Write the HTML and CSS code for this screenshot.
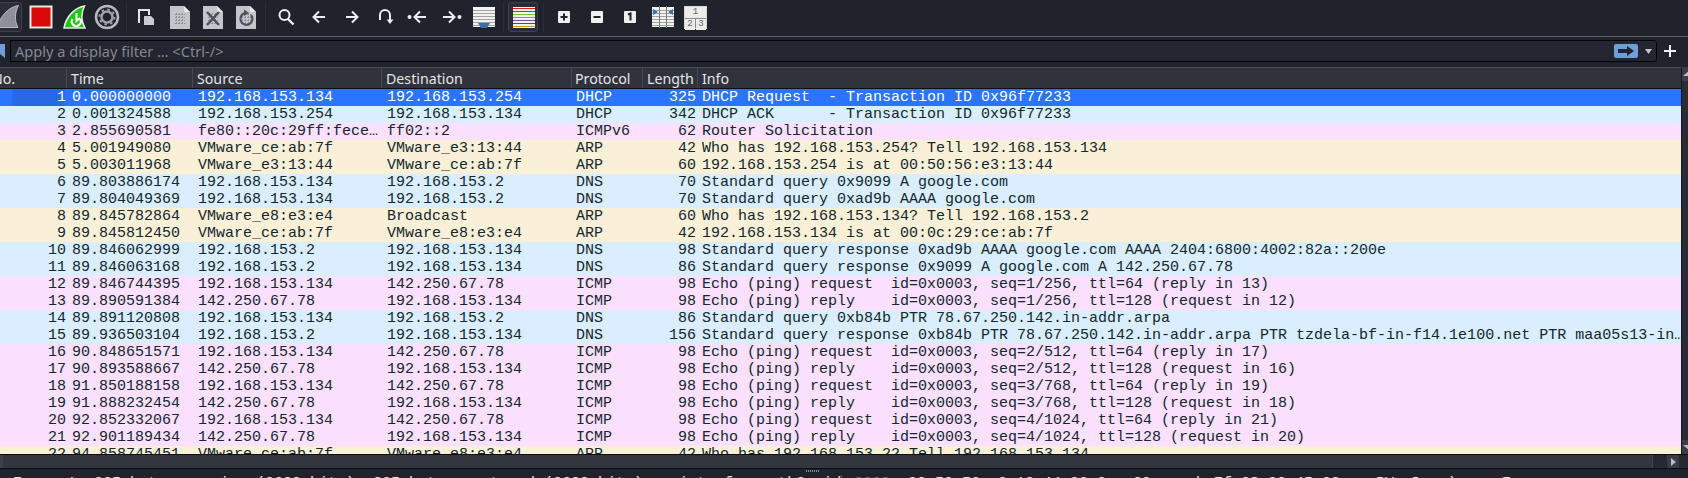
FILE: index.html
```html
<!DOCTYPE html>
<html>
<head>
  <title>Wireshark capture</title>
  <link rel="stylesheet" href="styles.css">
</head>
<body>
  <!-- shared page shapes for the toolbar icons -->
  <svg class="defs">
    <symbol id="doc" viewBox="0 0 24 24">
      <path d="M2 1H16L22 7V24H2Z" fill="#c3c5cb"/>
      <path d="M16 1L22 7H16Z" fill="#e6e7ea"/>
      <path d="M7 9.500H17M7 12.500H17M7 15.500H17M7 18.500H17M8.500 8V20M11.500 8V20M14.500 8V20" stroke="#8b8e96" stroke-width="1" stroke-dasharray="2 1"/>
    </symbol>
    <symbol id="lines" viewBox="0 0 24 24">
      <path d="M1 2H23V22H1Z" fill="#f1f1ef"/>
      <path d="M1 5.500H23M1 8.500H23M1 11.500H23M1 14.500H23M1 17.500H23M1 20.500H23" stroke="#a3a3a0" stroke-width="1"/>
    </symbol>
  </svg>

  <div class="toolbar">
    <div class="tool framed">
      <svg width="24" height="24" viewBox="0 0 24 24"><path d="M22.500 .5C12 2 4 12 1 22.500H22C18.500 16 18.500 8 22.500 .5Z" fill="#8d9098" stroke="#b9bbc0"/></svg>
    </div>
    <div class="tool">
      <svg width="24" height="24" viewBox="0 0 24 24"><rect x="1.500" y="1.500" width="21" height="21" fill="#d90a0a" stroke="#e8e8e8" stroke-width="2"/></svg>
    </div>
    <div class="tool">
      <svg width="24" height="24" viewBox="0 0 24 24"><path d="M22.500 1C12 3 4 12 2 23H23C19 16 19 8 22.500 1Z" fill="#1cc80c" stroke="#ececec" stroke-width="1.500"/><path d="M10.500 14A4.500 4.500 0 1 0 18 14" fill="none" stroke="#fff" stroke-width="2"/><path d="M14.500 8V16L18 13" fill="none" stroke="#fff" stroke-width="2"/></svg>
    </div>
    <div class="tool">
      <svg width="26" height="26" viewBox="0 0 26 26"><circle cx="13" cy="13" r="11" fill="none" stroke="#b6b8bd" stroke-width="2.500"/><circle cx="13" cy="13" r="5.500" fill="none" stroke="#9ea1a7" stroke-width="2.500"/><circle cx="13" cy="13" r="7.500" fill="none" stroke="#9ea1a7" stroke-width="2" stroke-dasharray="2.500 3.400"/></svg>
    </div>
    <div class="sep"></div>
    <div class="tool">
      <svg width="24" height="24" viewBox="0 0 24 24"><path d="M4 18V5H14V10" fill="none" stroke="#e6e6e6" stroke-width="2"/><path d="M9 11H16L19 14V20H9Z" fill="#c9cbd0"/></svg>
    </div>
    <div class="tool"><svg width="24" height="24"><use href="#doc"/></svg></div>
    <div class="tool">
      <svg width="24" height="24" viewBox="0 0 24 24"><use href="#doc" width="24" height="24"/><path d="M6 7L18 20M18 7L6 20" stroke="#4d5058" stroke-width="2.500"/></svg>
    </div>
    <div class="tool">
      <svg width="24" height="24" viewBox="0 0 24 24"><use href="#doc" width="24" height="24"/><path d="M17 10A6 6 0 1 1 11 8" fill="none" stroke="#4d5058" stroke-width="2.200"/><path d="M10 4.500V11L15 8Z" fill="#4d5058"/></svg>
    </div>
    <div class="sep"></div>
    <div class="tool">
      <svg width="24" height="24" viewBox="0 0 24 24"><circle cx="10.500" cy="10" r="5" fill="none" stroke="#eee" stroke-width="2"/><path d="M14 14L19.500 19.500" stroke="#eee" stroke-width="2.400"/></svg>
    </div>
    <div class="tool">
      <svg width="24" height="24" viewBox="0 0 24 24"><path d="M18 12H7M12 6.500L6.500 12L12 17.500" fill="none" stroke="#eee" stroke-width="2"/></svg>
    </div>
    <div class="tool">
      <svg width="24" height="24" viewBox="0 0 24 24"><path d="M6 12H17M12 6.500L17.500 12L12 17.500" fill="none" stroke="#eee" stroke-width="2"/></svg>
    </div>
    <div class="tool">
      <svg width="24" height="24" viewBox="0 0 24 24"><path d="M7 15V10A5 5 0 0 1 17 10V17" fill="none" stroke="#eee" stroke-width="2"/><path d="M13.500 14.500L17 19L20.500 14.500Z" fill="#eee"/></svg>
    </div>
    <div class="tool">
      <svg width="24" height="24" viewBox="0 0 24 24"><circle cx="3.500" cy="12" r="2" fill="#eee"/><path d="M20 12H10M14 6.500L8.500 12L14 17.500" fill="none" stroke="#eee" stroke-width="2"/></svg>
    </div>
    <div class="tool">
      <svg width="24" height="24" viewBox="0 0 24 24"><path d="M4 12H14M10 6.500L15.500 12L10 17.500" fill="none" stroke="#eee" stroke-width="2"/><circle cx="20.500" cy="12" r="2" fill="#eee"/></svg>
    </div>
    <div class="tool">
      <svg width="24" height="24" viewBox="0 0 24 24"><use href="#lines" width="24" height="24"/><path d="M6 18H18L15 23H9Z" fill="#3a6eaa"/></svg>
    </div>
    <div class="sep"></div>
    <div class="tool framed">
      <svg width="24" height="24" viewBox="0 0 24 24"><path d="M1 2H23V23H1Z" fill="#f1f1ef"/><path d="M1 3.500H23" stroke="#e01b1b"/><path d="M1 6.500H23" stroke="#2b5fb0"/><path d="M1 9.500H23" stroke="#7ec21f"/><path d="M1 12.500H23" stroke="#8f8f8f"/><path d="M1 15.500H23" stroke="#7a4d9c"/><path d="M1 18.500H23" stroke="#5a4a68"/><path d="M1 21.500H23" stroke="#c79a1b"/></svg>
    </div>
    <div class="sep"></div>
    <div class="tool">
      <svg width="24" height="24" viewBox="0 0 24 24"><rect x="6" y="6" width="12" height="12" rx="1" fill="#efefef"/><path d="M8.500 12H15.500M12 8.500V15.500" stroke="#222" stroke-width="2"/></svg>
    </div>
    <div class="tool">
      <svg width="24" height="24" viewBox="0 0 24 24"><rect x="6" y="6" width="12" height="12" rx="1" fill="#efefef"/><path d="M8.500 12H15.500" stroke="#222" stroke-width="2"/></svg>
    </div>
    <div class="tool">
      <svg width="24" height="24" viewBox="0 0 24 24"><rect x="6" y="6" width="12" height="12" rx="1" fill="#efefef"/><path d="M10 9.500L12.500 8.500V15.500" fill="none" stroke="#222" stroke-width="2"/></svg>
    </div>
    <div class="tool">
      <svg width="24" height="24" viewBox="0 0 24 24"><use href="#lines" width="24" height="24"/><path d="M2 4L7 7L2 10ZM22 4L17 7L22 10Z" fill="#3a6eaa"/><path d="M8.500 1V23M15.500 1V23" stroke="#77797d"/></svg>
    </div>
    <div class="tool">
      <div class="panes">
        <span class="pane-top">1</span>
        <span>2</span>
        <span>3</span>
      </div>
    </div>
  </div>

  <div class="filterbar">
    <svg class="bookmark" width="5" height="16" viewBox="0 0 5 16"><path d="M0 1H5V15L0 11Z" fill="#6f9fd8"/></svg>
    <div class="filter">
      <span class="placeholder">Apply a display filter … &lt;Ctrl-/&gt;</span>
      <span class="apply">
        <svg width="16" height="10" viewBox="0 0 16 10"><path d="M0 3H9V0L16 5L9 10V7H0Z" fill="#1e2430"/></svg>
      </span>
      <svg class="caret" width="7" height="5" viewBox="0 0 7 5"><path d="M0 0H7L3.500 5Z" fill="#c4c6ca"/></svg>
    </div>
    <svg class="add" width="14" height="14" viewBox="0 0 14 14"><path d="M7 1V13M1 7H13" stroke="#eee" stroke-width="2"/></svg>
  </div>

  <div class="packets">
    <div class="list">
      <div class="cols head">
        <div class="no-head">No.</div><div>Time</div><div>Source</div><div>Destination</div><div>Protocol</div><div>Length</div><div>Info</div>
      </div>
      <div class="rows">
        <div class="cols row selected"><div>1</div><div>0.000000000</div><div>192.168.153.134</div><div>192.168.153.254</div><div>DHCP</div><div>325</div><div>DHCP Request  - Transaction ID 0x96f77233</div></div>
        <div class="cols row udp"><div>2</div><div>0.001324588</div><div>192.168.153.254</div><div>192.168.153.134</div><div>DHCP</div><div>342</div><div>DHCP ACK      - Transaction ID 0x96f77233</div></div>
        <div class="cols row icmp"><div>3</div><div>2.855690581</div><div>fe80::20c:29ff:fece…</div><div>ff02::2</div><div>ICMPv6</div><div>62</div><div>Router Solicitation</div></div>
        <div class="cols row arp"><div>4</div><div>5.001949080</div><div>VMware_ce:ab:7f</div><div>VMware_e3:13:44</div><div>ARP</div><div>42</div><div>Who has 192.168.153.254? Tell 192.168.153.134</div></div>
        <div class="cols row arp"><div>5</div><div>5.003011968</div><div>VMware_e3:13:44</div><div>VMware_ce:ab:7f</div><div>ARP</div><div>60</div><div>192.168.153.254 is at 00:50:56:e3:13:44</div></div>
        <div class="cols row udp"><div>6</div><div>89.803886174</div><div>192.168.153.134</div><div>192.168.153.2</div><div>DNS</div><div>70</div><div>Standard query 0x9099 A google.com</div></div>
        <div class="cols row udp"><div>7</div><div>89.804049369</div><div>192.168.153.134</div><div>192.168.153.2</div><div>DNS</div><div>70</div><div>Standard query 0xad9b AAAA google.com</div></div>
        <div class="cols row arp"><div>8</div><div>89.845782864</div><div>VMware_e8:e3:e4</div><div>Broadcast</div><div>ARP</div><div>60</div><div>Who has 192.168.153.134? Tell 192.168.153.2</div></div>
        <div class="cols row arp"><div>9</div><div>89.845812450</div><div>VMware_ce:ab:7f</div><div>VMware_e8:e3:e4</div><div>ARP</div><div>42</div><div>192.168.153.134 is at 00:0c:29:ce:ab:7f</div></div>
        <div class="cols row udp"><div>10</div><div>89.846062999</div><div>192.168.153.2</div><div>192.168.153.134</div><div>DNS</div><div>98</div><div>Standard query response 0xad9b AAAA google.com AAAA 2404:6800:4002:82a::200e</div></div>
        <div class="cols row udp"><div>11</div><div>89.846063168</div><div>192.168.153.2</div><div>192.168.153.134</div><div>DNS</div><div>86</div><div>Standard query response 0x9099 A google.com A 142.250.67.78</div></div>
        <div class="cols row icmp"><div>12</div><div>89.846744395</div><div>192.168.153.134</div><div>142.250.67.78</div><div>ICMP</div><div>98</div><div>Echo (ping) request  id=0x0003, seq=1/256, ttl=64 (reply in 13)</div></div>
        <div class="cols row icmp"><div>13</div><div>89.890591384</div><div>142.250.67.78</div><div>192.168.153.134</div><div>ICMP</div><div>98</div><div>Echo (ping) reply    id=0x0003, seq=1/256, ttl=128 (request in 12)</div></div>
        <div class="cols row udp"><div>14</div><div>89.891120808</div><div>192.168.153.134</div><div>192.168.153.2</div><div>DNS</div><div>86</div><div>Standard query 0xb84b PTR 78.67.250.142.in-addr.arpa</div></div>
        <div class="cols row udp"><div>15</div><div>89.936503104</div><div>192.168.153.2</div><div>192.168.153.134</div><div>DNS</div><div>156</div><div>Standard query response 0xb84b PTR 78.67.250.142.in-addr.arpa PTR tzdela-bf-in-f14.1e100.net PTR maa05s13-in…</div></div>
        <div class="cols row icmp"><div>16</div><div>90.848651571</div><div>192.168.153.134</div><div>142.250.67.78</div><div>ICMP</div><div>98</div><div>Echo (ping) request  id=0x0003, seq=2/512, ttl=64 (reply in 17)</div></div>
        <div class="cols row icmp"><div>17</div><div>90.893588667</div><div>142.250.67.78</div><div>192.168.153.134</div><div>ICMP</div><div>98</div><div>Echo (ping) reply    id=0x0003, seq=2/512, ttl=128 (request in 16)</div></div>
        <div class="cols row icmp"><div>18</div><div>91.850188158</div><div>192.168.153.134</div><div>142.250.67.78</div><div>ICMP</div><div>98</div><div>Echo (ping) request  id=0x0003, seq=3/768, ttl=64 (reply in 19)</div></div>
        <div class="cols row icmp"><div>19</div><div>91.888232454</div><div>142.250.67.78</div><div>192.168.153.134</div><div>ICMP</div><div>98</div><div>Echo (ping) reply    id=0x0003, seq=3/768, ttl=128 (request in 18)</div></div>
        <div class="cols row icmp"><div>20</div><div>92.852332067</div><div>192.168.153.134</div><div>142.250.67.78</div><div>ICMP</div><div>98</div><div>Echo (ping) request  id=0x0003, seq=4/1024, ttl=64 (reply in 21)</div></div>
        <div class="cols row icmp"><div>21</div><div>92.901189434</div><div>142.250.67.78</div><div>192.168.153.134</div><div>ICMP</div><div>98</div><div>Echo (ping) reply    id=0x0003, seq=4/1024, ttl=128 (request in 20)</div></div>
        <div class="cols row arp"><div>22</div><div>94.858745451</div><div>VMware_ce:ab:7f</div><div>VMware_e8:e3:e4</div><div>ARP</div><div>42</div><div>Who has 192.168.153.22 Tell 192.168.153.134</div></div>
      </div>
    </div>
    <div class="vscroll">
      <svg class="vbtn" width="7" height="14" viewBox="0 0 7 14"><path d="M1 9L7 4V9Z" fill="#b9bbc0"/></svg>
      <svg class="vbtn" width="7" height="14" viewBox="0 0 7 14"><path d="M1 5H7V10Z" fill="#b9bbc0"/></svg>
    </div>
  </div>

  <div class="hscroll">
    <div class="hthumb"></div>
    <div class="hbtn"><svg width="5" height="8" viewBox="0 0 5 8"><path d="M0 0L5 4L0 8Z" fill="#b9bbc0"/></svg></div>
  </div>

  <div class="splitter"><span class="grip"></span></div>

  <div class="panes-bottom">
    <div class="details">Frame 1: 325 bytes on wire (2600 bits), 325 bytes captured (2600 bits) on interface eth0, id 0</div>
    <div class="bytes"><span class="offset">0000</span>  00 50 56 e3 13 44 00 0c  29 ce ab 7f 08 00 45 00   ·PV··D·· )·····E·</div>
  </div>
</body>
</html>
```

FILE: styles.css
```css
* { box-sizing: border-box; }
html, body {
  margin: 0;
  height: 478px;
  overflow: hidden;
  background-color: #20232c;
}
.defs { display: none; }

/* toolbar */
.toolbar {
  display: flex;
  height: 37px;
  margin-left: -9px;
  padding-top: 2px;
  border-bottom: 1px solid #63656a;
}
.tool {
  width: 33px;
  height: 30px;
  display: flex;
  align-items: center;
  justify-content: center;
  flex: none;
}
.tool.framed {
  position: relative;
}
.tool.framed::before {
  content: "";
  position: absolute;
  left: 1px;
  right: 2px;
  top: 0;
  bottom: 0;
  border: 1px solid #3e414b;
  border-radius: 3px;
  background-color: #2a2d37;
}
.tool.framed svg { position: relative; }
.sep {
  width: 7px;
  flex: none;
  display: flex;
  justify-content: center;
}
.sep::before {
  content: "";
  width: 1px;
  height: 30px;
  background-color: #2b2e37;
}
.panes {
  width: 23px;
  height: 23px;
  display: grid;
  grid-template-columns: 1fr 1fr;
  grid-template-rows: 1fr 1fr;
  gap: 1px;
  background-color: #8c8c8a;
  border: 1px solid #d8d8d5;
  font-family: "Liberation Mono", monospace;
  font-size: 9px;
  color: #666;
  text-align: center;
  line-height: 11px;
}
.panes span { background-color: #ebebe8; }
.pane-top { grid-column: 1 / 3; }

/* display filter */
.filterbar {
  display: flex;
  align-items: center;
  height: 30px;
  padding: 3px 0 5px;
}
.bookmark { flex: none; }
.filter {
  flex: none;
  width: 1647px;
  height: 22px;
  margin-left: 5px;
  display: flex;
  align-items: center;
  padding-left: 4px;
  background-color: #232631;
  border: 1px solid #050506;
  border-radius: 0 3px 3px 0;
}
.placeholder {
  flex: 1;
  font-family: "Noto Sans", sans-serif;
  font-size: 14.6px;
  color: #85878c;
}
.apply {
  width: 24px;
  height: 14px;
  display: flex;
  align-items: center;
  justify-content: center;
  background-color: #6f9fd8;
  border-radius: 2px;
}
.caret { margin: 0 4px 0 7px; }
.add { margin-left: 6px; }

/* packet list */
.packets {
  display: flex;
  height: 387px;
}
.list {
  width: 1681px;
  flex: none;
  overflow: hidden;
}
.cols {
  display: grid;
  grid-template-columns: 67px 126px 189px 190px 71px 55px 1fr;
}
.head {
  height: 22px;
  background-color: #30323c;
  border-top: 1px solid #4a4c56;
  border-bottom: 1px solid #0c0d10;
  font-family: "Noto Sans", sans-serif;
  font-size: 14.2px;
  line-height: 22px;
  color: #e4e5e7;
}
.head div {
  height: 20px;
  padding-left: 4px;
  border-right: 1px solid #46484f;
  white-space: nowrap;
}
.head .no-head {
  padding-left: 0;
  text-indent: -8px;
}
.head div:nth-child(5) { padding-left: 3px; }
.head div:last-child { border-right: 0; }
.rows {
  height: 365px;
  overflow: hidden;
}
.row {
  height: 17px;
  font-family: "Liberation Mono", monospace;
  font-size: 15px;
  line-height: 17px;
  color: #12272e;
  white-space: pre;
}
.row div {
  padding-left: 5px;
  overflow: hidden;
}
.row div:nth-child(1) {
  padding: 0 1px 0 0;
  text-align: right;
}
.row div:nth-child(5) { padding-left: 4px; }
.row div:nth-child(6) {
  padding: 0 2px 0 0;
  text-align: right;
}
.row div:nth-child(7) { padding-left: 4px; }
.udp { background-color: #daeeff; }
.icmp { background-color: #fce0ff; }
.arp { background-color: #faf0d7; }
.selected {
  background-color: #2a74ff;
  color: #fff;
}
.selected div:first-child { background-image: linear-gradient(90deg, #2a74ff 12px, #2868e4 13px, #2868e4 64px, #2a74ff 65px); }

.vscroll {
  flex: 1;
  display: flex;
  flex-direction: column;
  justify-content: space-between;
  background-color: #2a2c35;
  border-left: 1px solid #15161b;
}
.vbtn {
  background-color: #3a3c46;
}

/* bottom of the window */
.hscroll {
  display: flex;
  height: 14px;
  border-top: 1px solid #0c0d10;
  background-color: #272932;
}
.hthumb {
  width: 1653px;
  background-color: #33353f;
  border-left: 3px solid #3d3f49;
  border-right: 1px solid #44464f;
}
.hbtn {
  width: 12px;
  margin: 0 8px 0 14px;
  display: flex;
  align-items: center;
  justify-content: center;
  background-color: #393b45;
}
.splitter {
  height: 5px;
  display: flex;
  justify-content: center;
  background-color: #20232c;
  border-top: 1px solid #0c0d10;
}
.grip {
  width: 13px;
  height: 2px;
  margin: 1px 0 0 -64px;
  background-image: repeating-linear-gradient(90deg, #8a8c92 0 1px, transparent 1px 2px);
}
.panes-bottom {
  display: flex;
  height: 22px;
  padding-top: 2px;
  font-family: "Liberation Mono", monospace;
  font-size: 15px;
  line-height: 17px;
  color: #e4e5e7;
  white-space: pre;
}
.details {
  width: 842px;
  padding-left: 13px;
  overflow: hidden;
  border-right: 1px solid #55575e;
}
.bytes { padding-left: 12px; }
.offset { color: #74767c; }
```
